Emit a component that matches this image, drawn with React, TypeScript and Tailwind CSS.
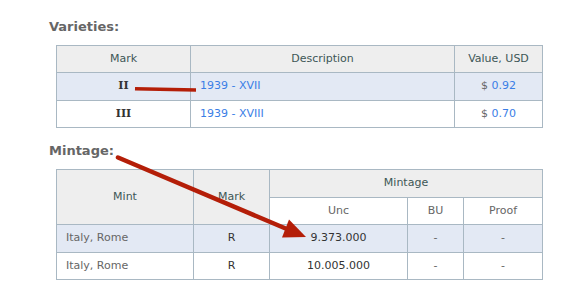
import React from "react";

const font = { fontFamily: '"DejaVu Sans", Verdana, sans-serif' };

export default function App() {
  const th = "border border-[#a9b8c3] bg-[#eeeeee] text-[#3d5656] font-normal text-center";
  const td = "border border-[#a9b8c3]";
  return (
    <div className="relative w-[564px] h-[292px] bg-white text-[11px]" style={font}>
      <div className="pt-[18px] pl-[49px]">
        <h2 className="text-[13px] leading-[18px] font-bold text-[#666666]">Varieties:</h2>
        <table className="ml-[7px] mt-[9px] border-collapse table-fixed w-[486px]">
          <colgroup>
            <col className="w-[134px]" />
            <col className="w-[264px]" />
            <col className="w-[88px]" />
          </colgroup>
          <tbody>
            <tr className="h-[27px]">
              <th className={th}>Mark</th>
              <th className={th}>Description</th>
              <th className={th}>Value, USD</th>
            </tr>
            <tr className="h-[28px] bg-[#e3e9f4]">
              <td className={`${td} text-center font-bold text-[#333333]`} style={{ fontFamily: '"DejaVu Serif", serif' }}>II</td>
              <td className={`${td} pl-[9px] text-[#3a7ee6]`}>1939 - XVII</td>
              <td className={`${td} text-center`}><span className="text-[#666666]">$</span> <span className="text-[#3a7ee6]">0.92</span></td>
            </tr>
            <tr className="h-[27px]">
              <td className={`${td} text-center font-bold text-[#333333]`} style={{ fontFamily: '"DejaVu Serif", serif' }}>III</td>
              <td className={`${td} pl-[9px] text-[#3a7ee6]`}>1939 - XVIII</td>
              <td className={`${td} text-center`}><span className="text-[#666666]">$</span> <span className="text-[#3a7ee6]">0.70</span></td>
            </tr>
          </tbody>
        </table>
        <h2 className="mt-[14px] text-[13px] leading-[18px] font-bold text-[#666666]">Mintage:</h2>
        <table className="ml-[7px] mt-[9px] border-collapse table-fixed w-[486px]">
          <colgroup>
            <col className="w-[137px]" />
            <col className="w-[76px]" />
            <col className="w-[138px]" />
            <col className="w-[56px]" />
            <col className="w-[79px]" />
          </colgroup>
          <tbody>
            <tr className="h-[28px]">
              <th className={th} rowSpan={2}>Mint</th>
              <th className={th} rowSpan={2}>Mark</th>
              <th className={th} colSpan={3}>Mintage</th>
            </tr>
            <tr className="h-[27px]">
              <td className={`${td} text-center text-[#666666]`}>Unc</td>
              <td className={`${td} text-center text-[#666666]`}>BU</td>
              <td className={`${td} text-center text-[#666666]`}>Proof</td>
            </tr>
            <tr className="h-[28px] bg-[#e3e9f4]">
              <td className={`${td} pl-[9px] text-[#666666]`}>Italy, Rome</td>
              <td className={`${td} text-center text-[#333333]`}>R</td>
              <td className={`${td} text-center text-[#333333]`}>9.373.000</td>
              <td className={`${td} text-center text-[#666666]`}>-</td>
              <td className={`${td} text-center text-[#666666]`}>-</td>
            </tr>
            <tr className="h-[27px]">
              <td className={`${td} pl-[9px] text-[#666666]`}>Italy, Rome</td>
              <td className={`${td} text-center text-[#333333]`}>R</td>
              <td className={`${td} text-center text-[#333333]`}>10.005.000</td>
              <td className={`${td} text-center text-[#666666]`}>-</td>
              <td className={`${td} text-center text-[#666666]`}>-</td>
            </tr>
          </tbody>
        </table>
      </div>
      <svg className="absolute left-0 top-0 pointer-events-none" width="564" height="292">
        <line x1="135" y1="88.8" x2="196" y2="90" stroke="#b41e08" strokeWidth="3.6" />
        <line x1="118" y1="157.5" x2="288" y2="229.5" stroke="#b41e08" strokeWidth="4.5" strokeLinecap="round" />
        <polygon points="306,237 289,219.5 282,237.5" fill="#b41e08" />
      </svg>
    </div>
  );
}
